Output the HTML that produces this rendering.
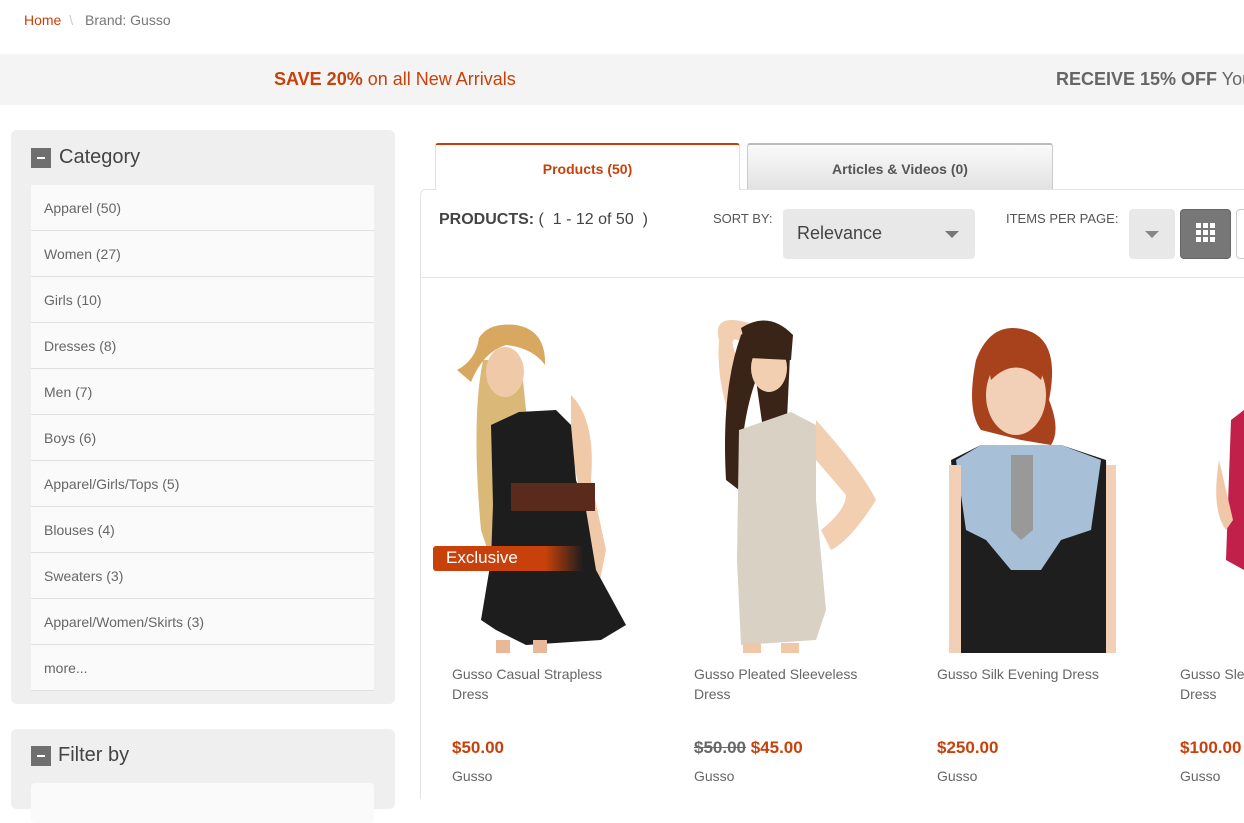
<!DOCTYPE html>
<html><head><meta charset="utf-8"><style>
*{box-sizing:border-box;margin:0;padding:0}
body{width:1244px;height:790px;overflow:hidden;background:#fff;font-family:"Liberation Sans",sans-serif;color:#555;position:relative}
.abs{position:absolute}
.crumb{left:24px;top:12px;font-size:14px;color:#777}
.crumb a{color:#c8410b;text-decoration:none}
.promo{left:0;top:54px;width:1244px;height:51px;background:#f4f4f4}
.promo span{position:absolute;top:15px;font-size:18px;white-space:nowrap}
.side{left:11px;width:384px;background:#efefef;border-radius:6px}
.side h2{position:absolute;left:31px;font-size:20px;font-weight:normal;color:#444}
.minus{position:absolute;left:20px;width:20px;height:20px;background:#6f6f6f}
.minus:after{content:"";position:absolute;left:6px;top:9px;width:8px;height:2px;background:#fff}
.list{position:absolute;left:20px;top:55px;width:343px;background:#fafafa}
.list div{height:46px;border-bottom:1px solid #e0e0e0;padding:15px 13px;font-size:14px;color:#666}
.tab{top:143px;height:46px;font-size:14px;font-weight:bold;text-align:center;line-height:48px}
.price{font-size:17px;font-weight:bold;color:#c8410b}
.name{font-size:14px;color:#666;line-height:20px}
.brand{font-size:14px;color:#666}
</style></head><body>
<div class="abs crumb"><a>Home</a> <span style="color:#ccc;margin:0 8px 0 4px">\</span> Brand: Gusso</div>
<div class="abs promo">
<span style="left:274px;color:#c8410b"><b>SAVE 20%</b> on all New Arrivals</span>
<span style="left:1056px;color:#666"><b>RECEIVE 15% OFF</b> Your</span>
</div>
<div class="abs side" style="top:130px;height:574px">
<div class="minus" style="top:18px"></div><h2 style="top:16px;left:48px">Category</h2>
<div class="list">
<div>Apparel (50)</div><div>Women (27)</div><div>Girls (10)</div><div>Dresses (8)</div><div>Men (7)</div><div>Boys (6)</div><div>Apparel/Girls/Tops (5)</div><div>Blouses (4)</div><div>Sweaters (3)</div><div>Apparel/Women/Skirts (3)</div><div>more...</div>
</div></div>
<div class="abs side" style="top:729px;height:80px">
<div class="minus" style="top:17px"></div><h2 style="top:15px;left:47px">Filter by</h2>
<div style="position:absolute;left:20px;top:54px;width:343px;height:40px;background:#fafafa;border-radius:4px"></div>
</div>
<div class="abs" style="left:420px;top:189px;width:830px;height:610px;border-left:1px solid #e4e4e4;border-top:1px solid #e4e4e4;border-top-left-radius:6px"></div>
<div class="abs tab" style="left:435px;width:305px;border:1px solid #e0e0e0;border-top:2px solid #c8410b;border-bottom:none;background:#fff;color:#c8410b;height:47px;border-radius:3px 3px 0 0">Products (50)</div>
<div class="abs tab" style="left:747px;width:306px;border:1px solid #ccc;border-top:2px solid #bbb;border-bottom:none;background:linear-gradient(#fafafa,#e2e2e2);color:#555;border-radius:3px 3px 0 0">Articles &amp; Videos (0)</div>
<div class="abs" style="left:439px;top:211px;font-size:16px;color:#444"><b>PRODUCTS:</b> (&nbsp; 1 - 12 of 50 &nbsp;)</div>
<div class="abs" style="left:713px;top:211px;font-size:13px;color:#555">SORT BY:</div>
<div class="abs" style="left:783px;top:209px;width:192px;height:50px;background:#e8e8e8;border-radius:4px;font-size:18px;color:#444;padding:14px 14px">Relevance<span style="position:absolute;right:16px;top:22px;border:7px solid transparent;border-top:7px solid #777;border-bottom:none"></span></div>
<div class="abs" style="left:1006px;top:211px;font-size:13px;color:#555">ITEMS PER PAGE:</div>
<div class="abs" style="left:1129px;top:209px;width:46px;height:50px;background:#e8e8e8;border-radius:4px"><span style="position:absolute;left:16px;top:22px;border:7px solid transparent;border-top:7px solid #888;border-bottom:none"></span></div>
<div class="abs" style="left:1180px;top:209px;width:51px;height:50px;background:#777;border-radius:4px;border:1px solid #666">
<svg width="51" height="50" style="position:absolute;left:-1px;top:-1px"><g fill="#fff"><rect x="16" y="14" width="5" height="5"/><rect x="23" y="14" width="5" height="5"/><rect x="30" y="14" width="5" height="5"/><rect x="16" y="21" width="5" height="5"/><rect x="23" y="21" width="5" height="5"/><rect x="30" y="21" width="5" height="5"/><rect x="16" y="28" width="5" height="5"/><rect x="23" y="28" width="5" height="5"/><rect x="30" y="28" width="5" height="5"/></g></svg></div>
<div class="abs" style="left:1236px;top:209px;width:20px;height:50px;border:1px solid #ccc;border-radius:4px"></div>
<div class="abs" style="left:421px;top:277px;width:823px;height:1px;background:#e4e4e4"></div>
<svg class="abs" style="left:421px;top:300px" width="823" height="353">
<!-- p1 -->
<path d="M150 95 Q175 120 170 180 L185 250 L175 300 L160 300 L165 220 L150 150Z" fill="#f0c9a8"/>
<path d="M62 60 Q50 120 60 230 L80 290 L95 290 L85 200 L105 110 L100 60Z" fill="#d9b878"/>
<ellipse cx="84" cy="72" rx="19" ry="25" fill="#f0c9a8"/>
<path d="M100 90 Q115 140 110 200 L95 200 L88 100Z" fill="#d9b878"/>
<path d="M36 70 Q55 60 58 38 Q68 22 95 25 Q125 30 124 65 Q112 48 85 45 Q62 52 50 82Z" fill="#d8a860"/>
<path d="M70 125 L98 112 L135 110 L150 125 L155 180 L165 210 L175 270 L205 325 L180 340 L105 345 L75 330 L60 320 L70 260 L72 205Z" fill="#1d1d1d"/>
<rect x="90" y="183" width="84" height="28" fill="#5a2a1c"/>
<rect x="75" y="340" width="14" height="13" fill="#e8b898"/><rect x="112" y="340" width="14" height="13" fill="#e8b898"/>
<!-- p2 -->
<path d="M298 40 Q290 10 335 25 L325 45 Q305 30 315 55 L325 115 L310 120 Q295 80 298 40Z" fill="#f2cfb0"/>
<path d="M320 35 Q345 10 370 35 L365 140 L345 150 L335 80 Q320 120 318 190 L305 180 Q300 90 320 35Z" fill="#3a2418"/>
<ellipse cx="348" cy="68" rx="18" ry="24" fill="#f2cfb0"/>
<path d="M320 28 Q348 10 372 35 L370 60 L328 58Z" fill="#3a2418"/>
<path d="M395 120 Q440 170 455 200 Q430 240 410 250 L400 230 Q425 210 425 195 L395 160Z" fill="#f2cfb0"/>
<path d="M318 130 L370 112 L395 125 L395 200 L405 310 L395 340 L320 345 L316 260Z" fill="#d9d1c4"/>
<rect x="322" y="343" width="18" height="10" fill="#f0c8a8"/><rect x="360" y="343" width="18" height="10" fill="#f0c8a8"/>
<!-- p3 -->
<path d="M555 60 Q570 20 605 30 Q640 40 628 100 Q640 130 630 145 L600 140 L560 130 Q545 110 555 60Z" fill="#a8421c"/>
<ellipse cx="595" cy="95" rx="30" ry="40" fill="#f2d0b8"/>
<path d="M565 55 Q600 30 625 60 L620 80 Q595 55 570 80Z" fill="#a8421c"/>
<path d="M530 160 L560 145 L640 145 L685 160 L690 300 L690 353 L538 353 L540 300Z" fill="#1e1e1e"/>
<path d="M535 160 L560 145 L640 145 L680 160 L670 230 L640 240 L620 270 L590 270 L565 240 L545 230Z" fill="#a8bfd8"/>
<path d="M590 155 L612 155 L612 230 L600 240 L590 230Z" fill="#999"/>
<path d="M528 165 L540 165 L540 353 L528 353Z M685 165 L695 165 L695 353 L685 353Z" fill="#f2d0b8"/>
<!-- p4 -->
<path d="M810 120 L823 110 L823 270 L805 260 Z" fill="#c0204a"/>
<path d="M798 160 Q790 210 805 230 L812 220 Z" fill="#f0c8a8"/>
</svg>
<div class="abs" style="left:433px;top:546px;width:150px;height:25px;background:linear-gradient(90deg,#c8410b 75%,rgba(200,65,11,0));border-radius:3px 0 0 3px;color:#fff;font-size:17px;padding:2px 13px">Exclusive</div>
<div class="abs name" style="left:452px;top:664px;width:200px">Gusso Casual Strapless<br>Dress</div>
<div class="abs name" style="left:694px;top:664px;width:200px">Gusso Pleated Sleeveless<br>Dress</div>
<div class="abs name" style="left:937px;top:664px;width:200px">Gusso Silk Evening Dress</div>
<div class="abs name" style="left:1180px;top:664px;width:200px;white-space:nowrap">Gusso Sleeveless<br>Dress</div>
<div class="abs price" style="left:452px;top:738px">$50.00</div>
<div class="abs price" style="left:694px;top:738px"><s style="color:#666">$50.00</s> $45.00</div>
<div class="abs price" style="left:937px;top:738px">$250.00</div>
<div class="abs price" style="left:1180px;top:738px">$100.00</div>
<div class="abs brand" style="left:452px;top:768px">Gusso</div>
<div class="abs brand" style="left:694px;top:768px">Gusso</div>
<div class="abs brand" style="left:937px;top:768px">Gusso</div>
<div class="abs brand" style="left:1180px;top:768px">Gusso</div>
</body></html>
